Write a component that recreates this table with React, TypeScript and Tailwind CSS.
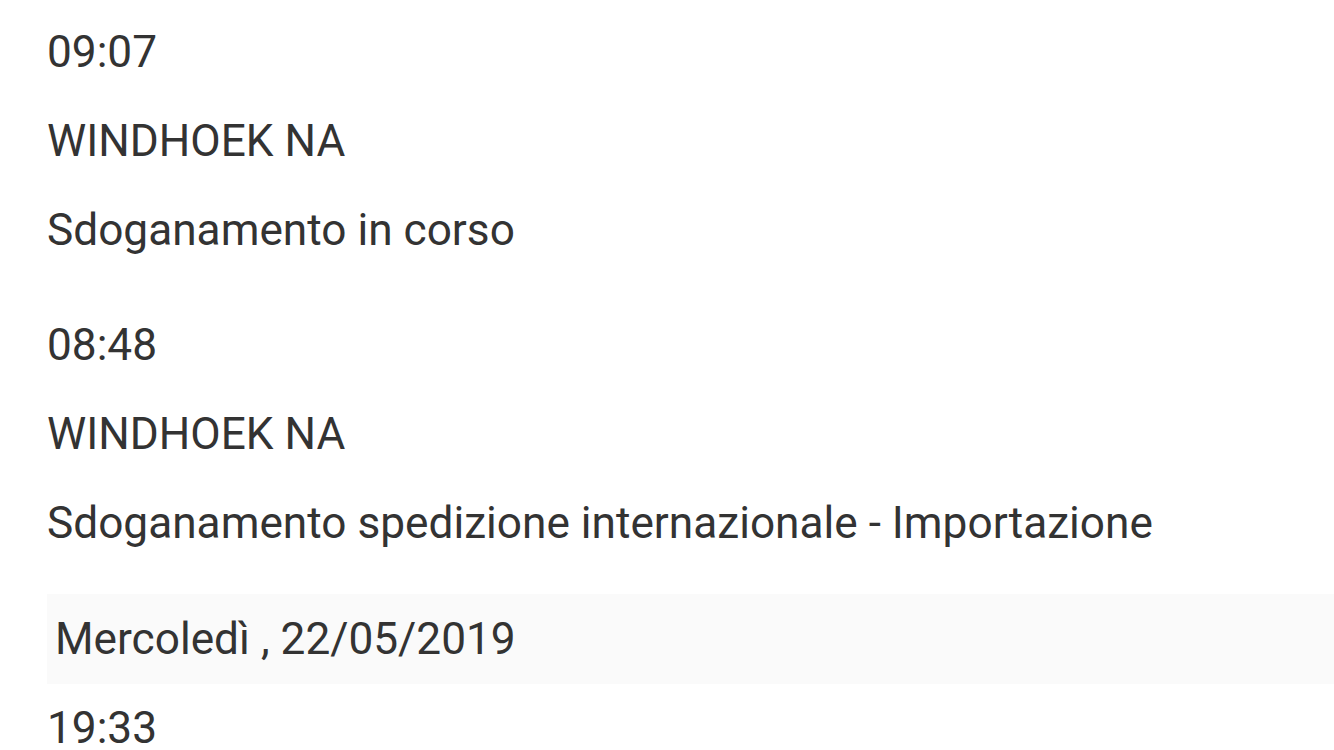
const events = [
  { time: '09:07', place: 'WINDHOEK NA', status: 'Sdoganamento in corso' },
  { time: '08:48', place: 'WINDHOEK NA', status: 'Sdoganamento spedizione internazionale - Importazione' },
];

function Line({ children }: { children: React.ReactNode }) {
  return <div className="h-[89px] leading-[89px] whitespace-nowrap">{children}</div>;
}

export default function App() {
  return (
    <div
      className="min-h-[750px] overflow-hidden bg-white pl-[47px] pt-[8px] text-[44.2px] text-[#333333]"
      style={{ fontFamily: 'Roboto, "Noto Sans", sans-serif' }}
    >
      {events.map((e) => (
        <div key={e.time} className="mb-[26px]">
          <Line>{e.time}</Line>
          <Line>{e.place}</Line>
          <Line>{e.status}</Line>
        </div>
      ))}
      <div className="h-[90px] bg-[#fafafa] pl-[8px] leading-[90px] whitespace-nowrap">
        Mercoledì , 22/05/2019
      </div>
      <Line>19:33</Line>
    </div>
  );
}
